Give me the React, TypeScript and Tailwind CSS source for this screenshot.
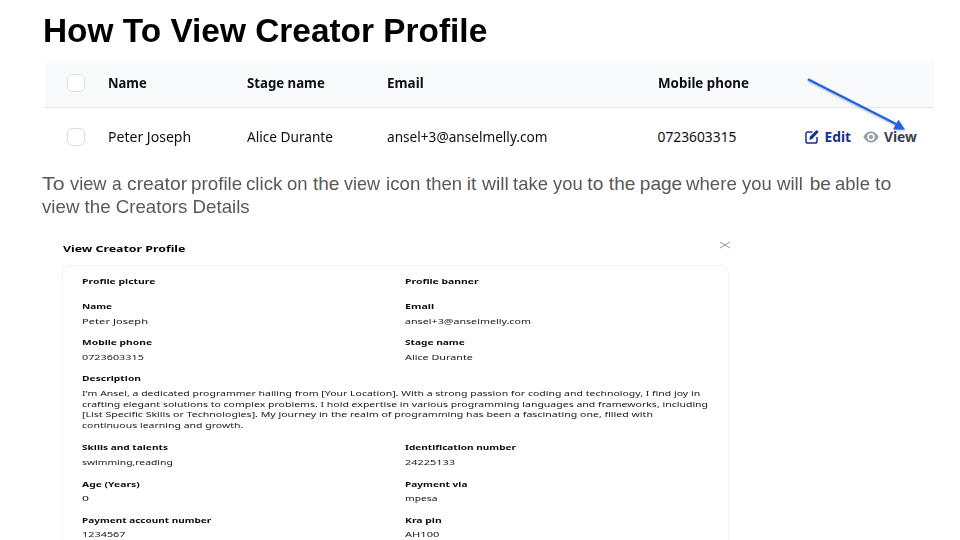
import { useLayoutEffect, useRef, useState } from "react";

const sans = "font-['Noto_Sans','Liberation_Sans',sans-serif]";

// Single line of text condensed or widened to a given width.
function Fit({ w, children, className = "" }: { w: number; children: string; className?: string }) {
  const ref = useRef<HTMLSpanElement>(null);
  const [scale, setScale] = useState(1);
  useLayoutEffect(() => {
    if (ref.current) setScale(w / ref.current.offsetWidth);
  }, [w, children]);
  return (
    <span className={`block shrink-0 ${className}`} style={{ width: w }}>
      <span
        ref={ref}
        className="inline-block origin-left whitespace-nowrap align-top"
        style={{ transform: `scaleX(${scale})` }}
      >
        {children}
      </span>
    </span>
  );
}

function Checkbox() {
  return <div className="mb-px h-[18px] w-[18px] shrink-0 rounded-[5px] border border-[#dcdee2] bg-white" />;
}

type Item = { label: string; lw: number; value?: string; vw?: number };

function Field({ label, lw, value, vw }: Item) {
  return (
    <div className="w-[323.3px] shrink-0">
      <Fit w={lw} className="h-[14.4px] font-bold leading-[14.4px] text-[#0b0d14]">{label}</Fit>
      {value && <Fit w={vw ?? 0} className="h-[14.4px] leading-[14.4px]">{value}</Fit>}
    </div>
  );
}

function Pair({ a, b, className = "h-[36.1px]" }: { a: Item; b: Item; className?: string }) {
  return (
    <div className={`flex shrink-0 ${className}`}>
      <Field {...a} />
      <Field {...b} />
    </div>
  );
}

// Word, its width and the advance to the next word.
const intro: [string, number, number][] = [
  ["To", 22.5, 27.5], ["view", 36.5, 42], ["a", 10, 15], ["creator", 60, 64], ["profile", 51.5, 55.7],
  ["click", 36.5, 41], ["on", 20.5, 25.7], ["the", 26, 31.3], ["view", 36, 42], ["icon", 34.5, 39.5],
  ["then", 36, 41], ["it", 10, 15], ["will", 26.5, 30.9], ["take", 35, 40.3], ["you", 30, 34.5],
  ["to", 16, 21.5], ["the", 26, 31], ["page", 42, 46], ["where", 51, 56.5], ["you", 30, 34.5],
  ["will", 25.5, 32.8], ["be", 21, 25], ["able", 35, 40], ["to", 16.5, 17],
];

const description: [string, number][] = [
  ["I'm Ansel, a dedicated programmer hailing from [Your Location]. With a strong passion for coding and technology, I find joy in", 618.5],
  ["crafting elegant solutions to complex problems. I hold expertise in various programming languages and frameworks, including", 625.5],
  ["[List Specific Skills or Technologies]. My journey in the realm of programming has been a fascinating one, filled with", 571],
  ["continuous learning and growth.", 161],
];

export default function App() {
  return (
    <div className="flex h-[540px] w-[960px] flex-col overflow-hidden bg-white">
      <h1 className="flex h-[60px] shrink-0 pl-[42.5px] pt-[12px] font-['Liberation_Sans',sans-serif] text-[32.5px] font-bold leading-[38px] text-black">
        <Fit w={444}>How To View Creator Profile</Fit>
      </h1>

      <section className={`relative ml-[45px] w-[889px] shrink-0 text-[13.8px] text-[#0d0f17] ${sans}`}>
        <div className="flex h-12 items-center rounded-tl-md border-b border-[#e3e5e9] bg-[#f9fafc] pl-[22px] font-bold">
          <Checkbox />
          <div className="w-[139px] pl-[23px]"><Fit w={38.5}>Name</Fit></div>
          <div className="ml-[22.5px] w-[140px]"><Fit w={77.5}>Stage name</Fit></div>
          <div className="w-[271px]"><Fit w={37}>Email</Fit></div>
          <Fit w={91}>Mobile phone</Fit>
        </div>
        <div className="flex h-[57px] items-center pl-[22px] pt-px">
          <Checkbox />
          <div className="w-[139px] pl-[23px]"><Fit w={83.5}>Peter Joseph</Fit></div>
          <div className="ml-[22.5px] w-[140px]"><Fit w={86}>Alice Durante</Fit></div>
          <div className="w-[271px]"><Fit w={160}>ansel+3@anselmelly.com</Fit></div>
          <div className="w-[147.5px]"><Fit w={79}>0723603315</Fit></div>
          <svg className="mr-[5.5px] mb-px h-[14px] w-[14px] shrink-0" viewBox="0 0 14 14" fill="none">
            <path d="M7 2H2.8C1.6 2 1 2.6 1 3.8v7.4C1 12.4 1.6 13 2.8 13h7.4c1.2 0 1.8-.6 1.8-1.8V7.5" stroke="#14318f" strokeWidth="1.5" strokeLinecap="round" />
            <path d="M4.3 9.9l.7-3.3 5.9-5.9q.9-.8 1.9.1t.1 1.9L7.2 8.9z" fill="#14318f" />
          </svg>
          <Fit w={27} className="font-bold text-[#14318f]">Edit</Fit>
          <svg className="ml-[11.5px] mr-[5px] mb-px h-[12px] w-[16px] shrink-0" viewBox="0 0 16 12">
            <path d="M.3 6C2.2 2.4 4.7.5 8 .5S13.8 2.4 15.7 6C13.8 9.6 11.3 11.5 8 11.5S2.2 9.600.3 6z" fill="#9aa0aa" />
            <circle cx="8" cy="6" r="2.9" fill="#9aa0aa" stroke="#fff" strokeWidth="1.5" />
          </svg>
          <Fit w={33} className="font-bold text-[#374151]">View</Fit>
        </div>
        <svg className="absolute left-[760px] top-[15px] h-[60px] w-[104px] drop-shadow-[0_1px_1px_rgba(0,0,0,0.3)]" viewBox="0 0 104 60">
          <path d="M3 4.3L93 50" stroke="#1b62e8" strokeWidth="2.1" />
          <path d="M93.5 45.2L99.5 54.3 88.6 54.1z" fill="#1b62e8" stroke="#1b62e8" strokeWidth=".6" />
        </svg>
      </section>

      <section className="h-[74px] shrink-0 pl-[42px] pt-[7px] font-['Liberation_Sans',sans-serif] text-[19px] leading-[23px] text-[#595959]">
        <div className="flex">
          {intro.map(([word, w, advance], i) => (
            <div key={i} className="shrink-0" style={{ width: advance }}>
              <Fit w={w}>{word}</Fit>
            </div>
          ))}
        </div>
        <Fit w={207.5}>view the Creators Details</Fit>
      </section>

      <section className={`ml-[62px] w-[667px] shrink-0 text-[7.5px] text-[#14161d] ${sans}`}>
        <div className="flex h-[26px] items-start pl-[1px] pt-[1px]">
          <Fit w={122} className="mt-[2px] text-[8.2px] font-bold leading-[14px] text-black">View Creator Profile</Fit>
          <svg className="ml-auto mr-[-2px] mt-[1px] h-[8px] w-[12px]" viewBox="0 0 12 8">
            <path d="M1 1l10 6M11 1L1 7" stroke="#8b8e96" strokeWidth=".9" />
          </svg>
        </div>
        <div className="flex h-[300px] flex-col rounded-t-lg border border-[#f3f3f5] pl-[18.5px] pt-[8px]">
          <Pair className="h-[25.3px]" a={{ label: "Profile picture", lw: 73.5 }} b={{ label: "Profile banner", lw: 73.5 }} />
          <Pair a={{ label: "Name", lw: 29.5, value: "Peter Joseph", vw: 65.5 }} b={{ label: "Email", lw: 28.5, value: "ansel+3@anselmelly.com", vw: 125.5 }} />
          <Pair a={{ label: "Mobile phone", lw: 70, value: "0723603315", vw: 62 }} b={{ label: "Stage name", lw: 59.5, value: "Alice Durante", vw: 67.5 }} />
          <div className="h-[69px] shrink-0">
            <Fit w={59} className="h-[16.2px] font-bold leading-[14.4px] text-[#0b0d14]">Description</Fit>
            {description.map(([line, w]) => (
              <Fit key={line} w={w} className="h-[10.85px] leading-[10.85px]">{line}</Fit>
            ))}
          </div>
          <Pair a={{ label: "Skills and talents", lw: 86.5, value: "swimming,reading", vw: 91 }} b={{ label: "Identification number", lw: 111.5, value: "24225133", vw: 49.5 }} />
          <Pair a={{ label: "Age (Years)", lw: 58, value: "0", vw: 6.5 }} b={{ label: "Payment via", lw: 62, value: "mpesa", vw: 33 }} />
          <Pair a={{ label: "Payment account number", lw: 129.5, value: "1234567", vw: 43.5 }} b={{ label: "Kra pin", lw: 36, value: "AH100", vw: 34 }} />
        </div>
      </section>
    </div>
  );
}
